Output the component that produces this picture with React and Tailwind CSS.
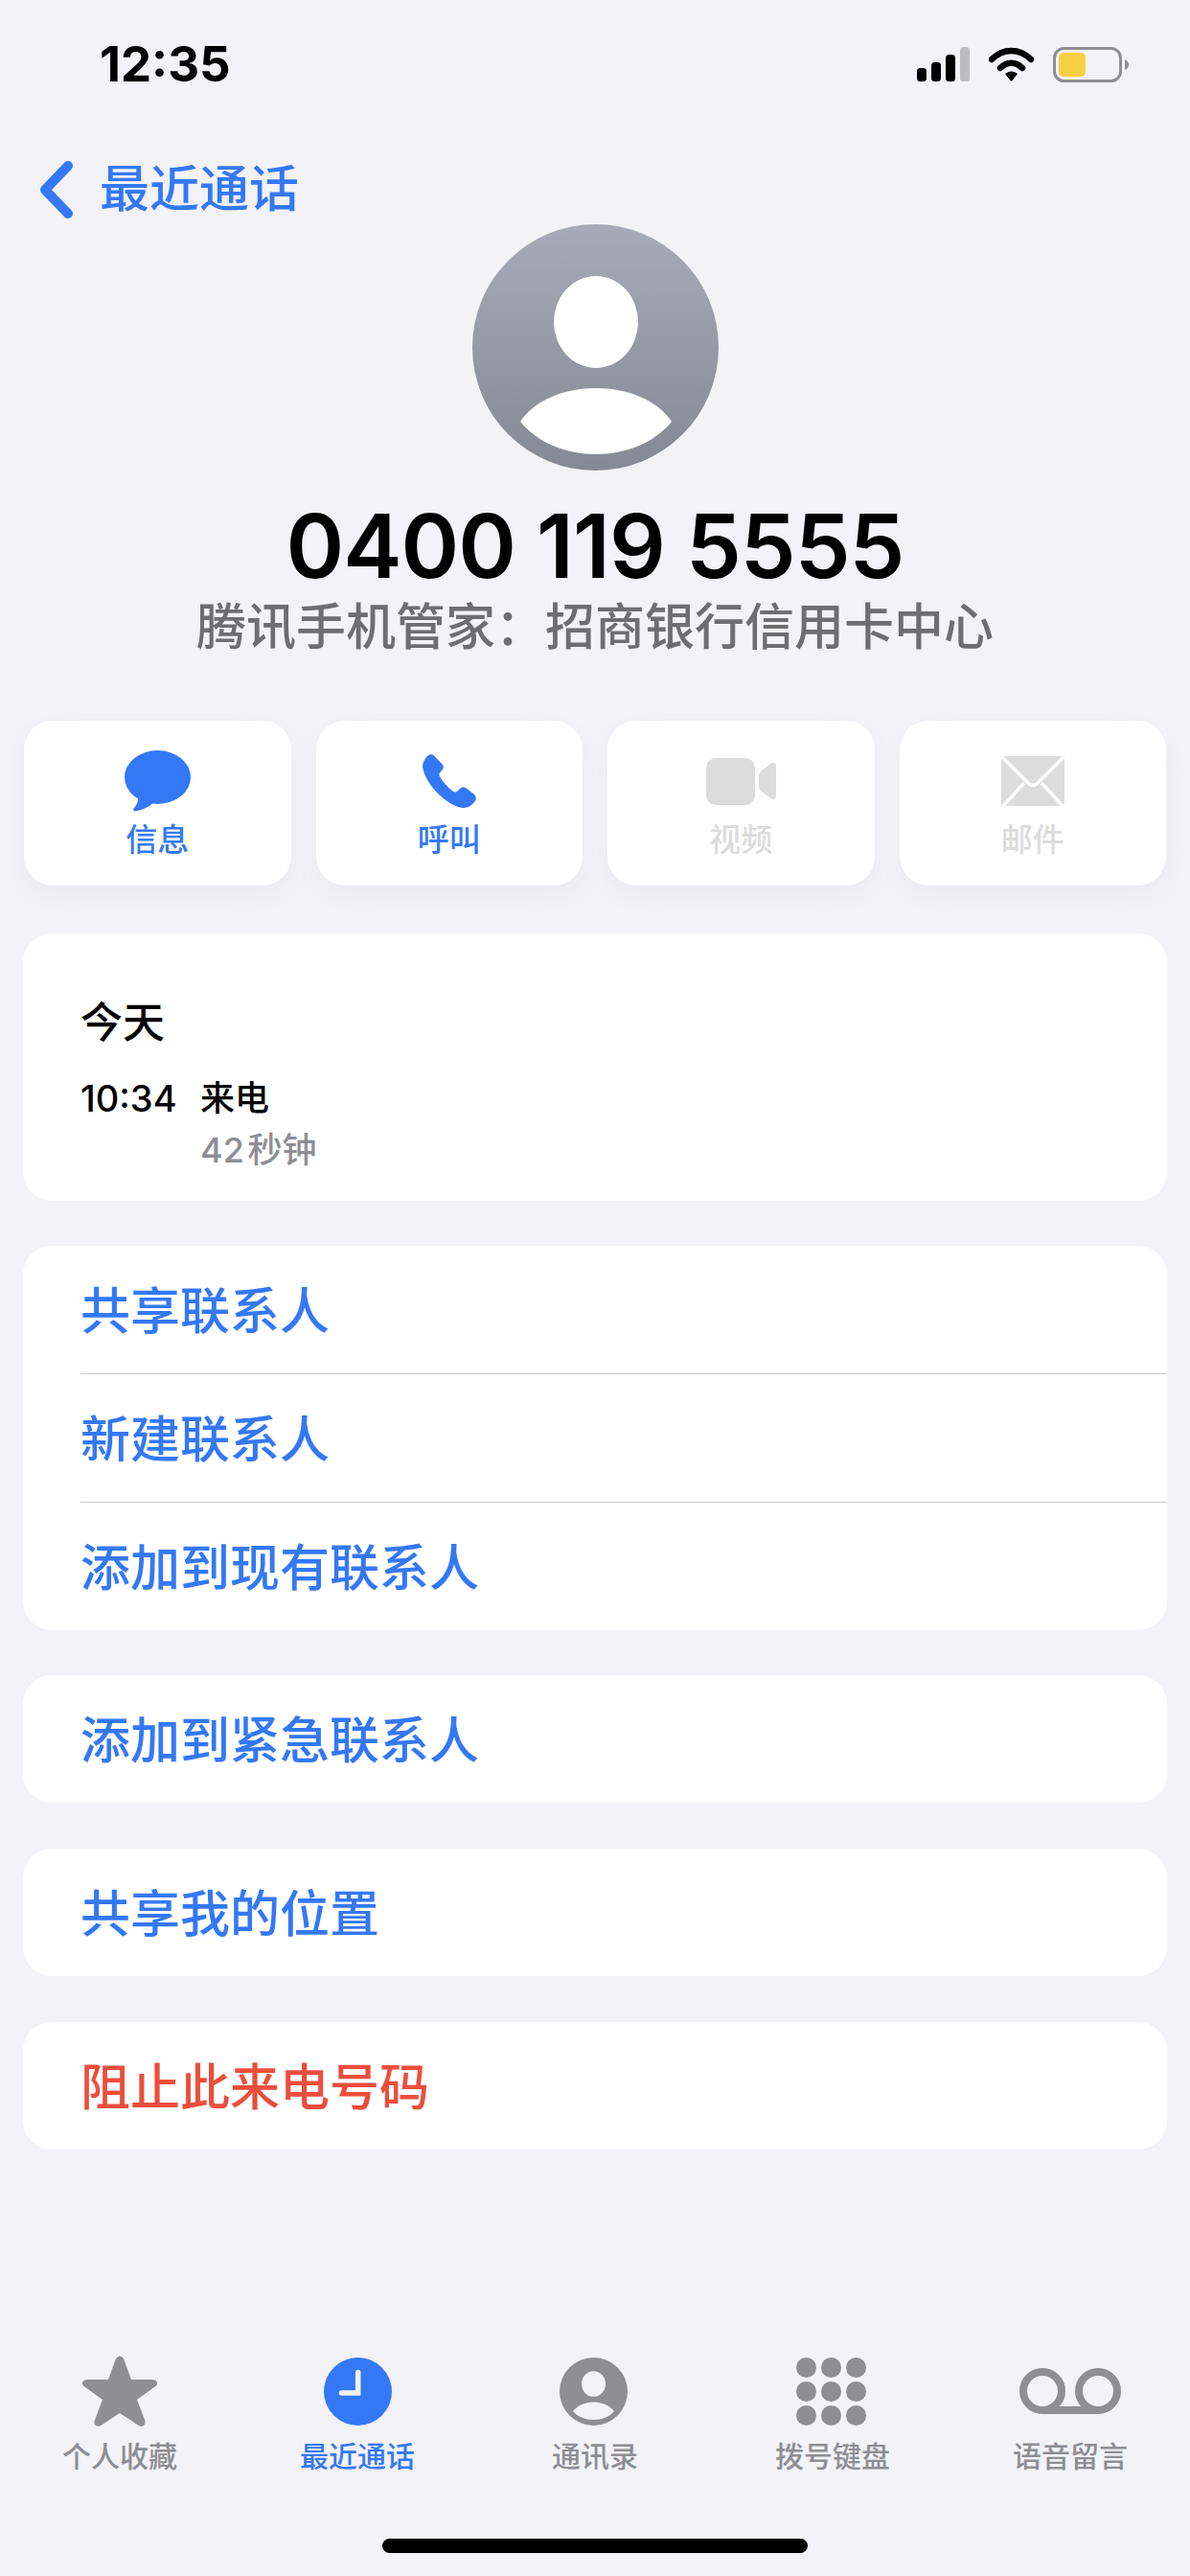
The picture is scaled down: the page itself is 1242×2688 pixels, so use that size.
import React from 'react';

const font = { fontFamily: '"Inter", "Noto Sans CJK SC", sans-serif' };

function SignalIcon() {
  return (
    <svg width="55" height="36" viewBox="0 0 55 36">
      <rect x="0" y="22" width="10" height="14" rx="3.5" fill="#000" />
      <rect x="15" y="16" width="10" height="20" rx="3.5" fill="#000" />
      <rect x="30" y="8" width="10" height="28" rx="3.5" fill="#000" />
      <rect x="45" y="0" width="10" height="36" rx="3.5" fill="#bcbcc0" />
    </svg>
  );
}

function WifiIcon() {
  return (
    <svg width="47" height="36" viewBox="0 0 47 36">
      <path d="M3 13 C15 1 32 1 44 13" fill="none" stroke="#000" strokeWidth="6.5" strokeLinecap="round" />
      <path d="M12 22 C19 15 28 15 35 22" fill="none" stroke="#000" strokeWidth="6.5" strokeLinecap="round" />
      <path d="M17 28 C21 24.5 26 24.5 30 28 L24.5 35 Q23.5 36 22.5 35 Z" fill="#000" />
    </svg>
  );
}

function BatteryIcon() {
  return (
    <svg width="79" height="37" viewBox="0 0 79 37">
      <rect x="1.5" y="1.5" width="69" height="34" rx="10" fill="none" stroke="#8e8e93" strokeWidth="3" />
      <rect x="6" y="6" width="28" height="25" rx="5" fill="#f8cf42" />
      <path d="M75 13 Q79 15 79 18.5 Q79 22 75 24 Z" fill="#8e8e93" />
    </svg>
  );
}

function MessageIcon() {
  return (
    <svg width="69" height="64" viewBox="0 0 69 64" fill="#3478f6">
      <ellipse cx="34.5" cy="28" rx="34.5" ry="28" />
      <path d="M14 46 C15 52 13 57 10 60 C8 63 10 64 13 63 C19 62 25 59 30 55 Z" />
    </svg>
  );
}

function PhoneIcon() {
  return (
    <svg width="56" height="56" viewBox="0 0 56 56" fill="#3478f6">
      <path d="M5 2 C7 0 10 -0.5 12 1.5 L21 11 C22.5 13 22 15 20 17 L18 19.5 C17 21 17.5 22.5 18.5 24 C22 30 26 34 31.5 38.5 C33 39.5 35 40 36.5 38.5 L39 36 C41 34 43 33.5 45 35 L54 42 C56 44 56.5 47 54.5 49.5 C51 54 47 56 42 56 C28 55 3 33 0 13 C0 9 2 5 5 2 Z" />
    </svg>
  );
}

function VideoIcon() {
  return (
    <svg width="73" height="49" viewBox="0 0 73 49" fill="#dcdcdc">
      <rect x="0" y="0" width="51" height="49" rx="10" />
      <path d="M55 18 Q55 16 57 14 L67 6 Q73 3 73 9 L73 38 Q73 45 67 42 L57 34 Q55 32 55 30 Z" />
    </svg>
  );
}

function MailIcon() {
  return (
    <svg width="66" height="52" viewBox="0 0 66 52">
      <rect x="0" y="0" width="66" height="52" rx="3" fill="#dcdcdc" />
      <path d="M-1 -1 L28 28 Q33 33 38 28 L67 -1 M0 54 L24 28 M66 54 L42 28" fill="none" stroke="#fff" strokeWidth="3.5" />
    </svg>
  );
}

function ActionButton({ icon, label, disabled }) {
  return (
    <div className="flex-1 h-[172px] rounded-[30px] bg-white shadow-[0_10px_30px_rgba(0,0,0,0.035)] flex flex-col items-center">
      <div className="h-[64px] mt-[31px] flex items-center justify-center">{icon}</div>
      <span className={`mt-[7px] text-[33px] leading-[44px] font-medium ${disabled ? 'text-[#dcdcdc]' : 'text-[#3478f6]'}`}>{label}</span>
    </div>
  );
}

function Row({ label, red }) {
  return (
    <div className={`h-[133px] pt-[4px] flex items-center text-[52px] font-medium ${red ? 'text-[#eb4e3d]' : 'text-[#3478f6]'}`}>
      {label}
    </div>
  );
}

function StarIcon() {
  return (
    <svg width="78" height="74" viewBox="0 0 78 74" fill="#8e8e93">
      <path d="M35 3 Q39 -2 43 3 L51 25 L73 25 Q79 26 78 30 Q77 32 75 33 L57 46 L65 67 Q67 72 63 73.5 Q61 74.5 58 72.5 L39 60 L20 72.5 Q17 74.5 15 73.5 Q11 72 13 67 L21 46 L3 33 Q1 32 0 30 Q-1 26 5 25 L27 25 Z" />
    </svg>
  );
}

function ClockIcon() {
  return (
    <svg width="71" height="71" viewBox="0 0 71 71">
      <circle cx="35.5" cy="35.5" r="35.5" fill="#3478f6" />
      <path d="M35.7 15.5 L35.7 37 L18.5 37" fill="none" stroke="#f2f2f7" strokeWidth="5.5" strokeLinecap="round" strokeLinejoin="miter" />
    </svg>
  );
}

function ContactIcon() {
  return (
    <svg className="-ml-[3px]" width="71" height="71" viewBox="0 0 71 71">
      <circle cx="35.5" cy="35.5" r="35.5" fill="#8e8e93" />
      <ellipse cx="35.5" cy="27.5" rx="12.5" ry="13.3" fill="#f2f2f7" />
      <path d="M14 56 C19 50 27 46.5 35.5 46.5 C44 46.5 52 50 57 56 C52 62 44 65 35.5 65 C27 65 19 62 14 56 Z" fill="#f2f2f7" />
    </svg>
  );
}

function KeypadIcon() {
  const spots = [10.5, 36.5, 62.5];
  return (
    <svg className="-ml-[3px]" width="73" height="71" viewBox="0 0 73 71" fill="#8e8e93">
      {spots.map((x) => [10.5, 35.5, 60.5].map((y) => <circle key={`${x}-${y}`} cx={x} cy={y} r="10.5" />))}
    </svg>
  );
}

function VoicemailIcon() {
  return (
    <svg width="106" height="48" viewBox="0 0 106 48">
      <circle cx="24" cy="24" r="20" fill="none" stroke="#8e8e93" strokeWidth="8" />
      <circle cx="82" cy="24" r="20" fill="none" stroke="#8e8e93" strokeWidth="8" />
      <path d="M24 44 L82 44" stroke="#8e8e93" strokeWidth="8" />
    </svg>
  );
}

function Tab({ icon, label, active }) {
  return (
    <div className="w-[248px] flex flex-col items-center">
      <div className="h-[76px] flex items-center justify-center">{icon}</div>
      <span className={`mt-[10px] text-[30px] leading-[40px] font-medium ${active ? 'text-[#3478f6]' : 'text-[#8e8e93]'}`}>{label}</span>
    </div>
  );
}

export default function App() {
  return (
    <div className="w-[1242px] h-[2688px] bg-[#f2f2f7] flex flex-col overflow-hidden" style={font}>
      <div className="h-[134px] flex items-center justify-between pl-[104px] pr-[64px]">
        <span className="text-[51px] font-bold text-black">12:35</span>
        <div className="flex items-center">
          <SignalIcon />
          <div className="ml-[20px]"><WifiIcon /></div>
          <div className="ml-[20px]"><BatteryIcon /></div>
        </div>
      </div>

      <div className="h-[100px] pt-[28px] pl-[40px] flex items-start">
        <div className="h-[72px] flex items-center">
          <svg width="38" height="62" viewBox="0 0 38 62">
            <path d="M31 6 L7 31 L31 56" fill="none" stroke="#3478f6" strokeWidth="10" strokeLinecap="round" strokeLinejoin="round" />
          </svg>
          <span className="ml-[26px] text-[52px] font-medium text-[#3478f6]">最近通话</span>
        </div>
      </div>

      <div className="self-center w-[257px] h-[257px] rounded-full bg-gradient-to-b from-[#a8abb7] to-[#858993]">
        <svg width="257" height="257" viewBox="0 0 257 257">
          <ellipse cx="129" cy="102" rx="44" ry="48" fill="#fff" />
          <path d="M50 206 C65 183 97 171 129 171 C161 171 193 183 208 206 C190 228 160 240 129 240 C98 240 68 228 50 206 Z" fill="#fff" />
        </svg>
      </div>

      <div className="mt-[29px] h-[100px] flex items-center justify-center text-[92px] tracking-[-1px] font-semibold text-black">0400 119 5555</div>
      <div className="h-[70px] flex items-center justify-center text-[52px] font-medium text-[#6d6d72]">腾讯手机管家：招商银行信用卡中心</div>

      <div className="mt-[62px] px-[25px] flex gap-[26px]">
        <ActionButton icon={<MessageIcon />} label="信息" />
        <ActionButton icon={<PhoneIcon />} label="呼叫" />
        <ActionButton icon={<VideoIcon />} label="视频" disabled />
        <ActionButton icon={<MailIcon />} label="邮件" disabled />
      </div>

      <div className="mt-[50px] mx-[24px] h-[279px] rounded-[30px] bg-white pl-[60px] pt-[65px]">
        <div className="text-[44px] leading-[56px] font-medium text-black">今天</div>
        <div className="mt-[28px] flex items-center h-[46px] text-[36px] font-medium text-black">
          <span className="w-[125px] text-[38px]">10:34</span>
          <span>来电</span>
        </div>
        <div className="mt-[8px] pl-[125px] h-[46px] flex items-center text-[36px] font-medium [word-spacing:-6px] text-[#8e8e93]">42 秒钟</div>
      </div>

      <div className="mt-[47px] mx-[24px] rounded-[30px] bg-white pl-[60px]">
        <div className="border-b border-[#c9c9cc]"><Row label="共享联系人" /></div>
        <div className="border-b border-[#c9c9cc]"><Row label="新建联系人" /></div>
        <Row label="添加到现有联系人" />
      </div>

      <div className="mt-[47px] mx-[24px] rounded-[30px] bg-white pl-[60px]"><Row label="添加到紧急联系人" /></div>
      <div className="mt-[48px] mx-[24px] rounded-[30px] bg-white pl-[60px]"><Row label="共享我的位置" /></div>
      <div className="mt-[48px] mx-[24px] rounded-[30px] bg-white pl-[60px]"><Row label="阻止此来电号码" red /></div>

      <div className="mt-auto flex justify-center">
        <Tab icon={<StarIcon />} label="个人收藏" />
        <Tab icon={<ClockIcon />} label="最近通话" active />
        <Tab icon={<ContactIcon />} label="通讯录" />
        <Tab icon={<KeypadIcon />} label="拨号键盘" />
        <Tab icon={<VoicemailIcon />} label="语音留言" />
      </div>
      <div className="mt-[66px] mb-[24px] self-center w-[444px] h-[15px] rounded-full bg-black" />
    </div>
  );
}
